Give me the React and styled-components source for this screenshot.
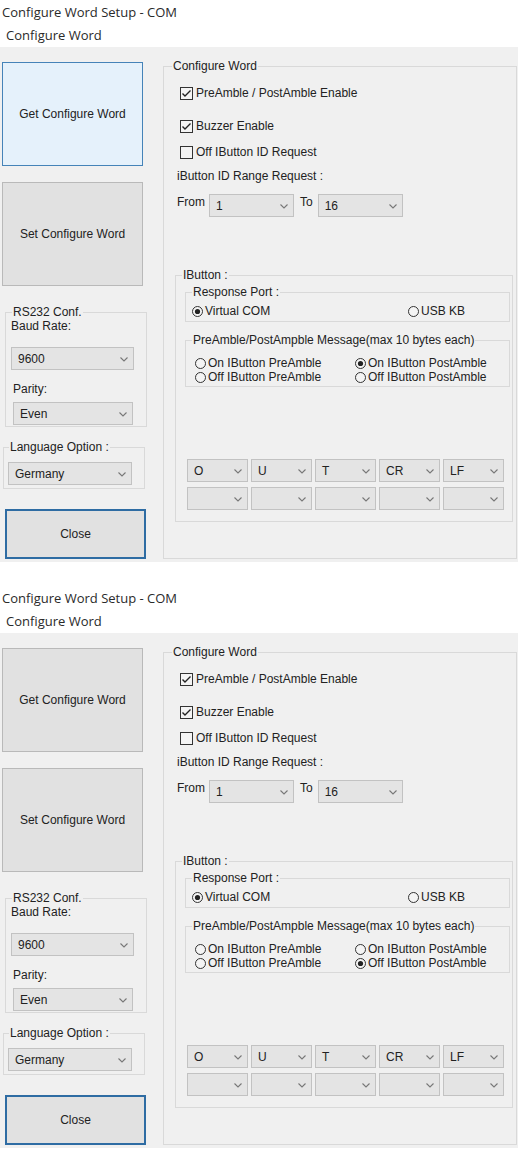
import React from 'react';
import styled, { createGlobalStyle } from 'styled-components';

const GlobalStyle = createGlobalStyle`
  html, body {
    margin: 0;
    padding: 0;
    background: #fff;
  }
  body {
    font-family: "Liberation Sans", Arial, sans-serif;
    font-size: 12px;
    color: #1f1f1f;
  }
  * {
    box-sizing: border-box;
  }
`;

const Page = styled.div`
  width: 518px;
  display: flex;
  flex-direction: column;
  gap: 24px;
`;

const Window = styled.section`
  width: 518px;
  display: flex;
  flex-direction: column;
`;

const TitleBar = styled.div`
  height: 24px;
  padding-left: 2px;
  font-family: "Open Sans", sans-serif;
  font-size: 13px;
  line-height: 24px;
  color: #2a2a2a;
`;

const SubTitle = styled(TitleBar)`
  height: 23px;
  line-height: 23px;
  padding-left: 6px;
`;

const Body = styled.div`
  display: flex;
  height: 515px;
  background: #f0f0f0;
`;

const LeftColumn = styled.div`
  width: 163px;
  flex-shrink: 0;
  padding: 15px 0 0 2px;
  display: flex;
  flex-direction: column;
  align-items: flex-start;
`;

const BigButton = styled.button`
  width: 141px;
  height: ${p => p.$h}px;
  margin: ${p => p.$m || 0};
  padding: 0;
  background: ${p => (p.$hover ? '#e5f1fb' : '#e1e1e1')};
  border: ${p =>
    p.$default ? '2px solid #2e6ca3' : p.$hover ? '1px solid #4583b8' : '1px solid #b9b9b9'};
  font: 12px "Liberation Sans", Arial, sans-serif;
  color: #222;
`;

const Group = styled.fieldset`
  margin: ${p => p.$m || 0};
  width: ${p => p.$w}px;
  padding: 0;
  border: 1px solid #d9d9d9;
  min-width: 0;
`;

const Legend = styled.legend`
  margin-left: ${p => p.$offset}px;
  padding: 0 1px;
  font-size: 12px;
  line-height: 14px;
  color: #222;
`;

const GroupContent = styled.div`
  padding: ${p => p.$pad};
  display: flex;
  flex-direction: column;
  align-items: flex-start;
`;

const FieldLabel = styled.div`
  line-height: 14px;
  margin: ${p => p.$m || 0};
  color: #222;
`;

const Combo = styled.div`
  width: ${p => (p.$w ? `${p.$w}px` : '100%')};
  height: 23px;
  margin: ${p => p.$m || 0};
  display: flex;
  align-items: center;
  justify-content: space-between;
  padding: 1px 5px 0 6px;
  background: #e4e4e4;
  border: 1px solid #c2c2c2;
  color: #222;
`;

const Chevron = () => (
  <svg width="8" height="5" viewBox="0 0 8 5">
    <polyline points="0.5,0.5 4,4 7.5,0.5" fill="none" stroke="#777" strokeWidth="1.1" />
  </svg>
);

const Select = ({ value, ...rest }) => (
  <Combo {...rest}>
    <span>{value}</span>
    <Chevron />
  </Combo>
);

const RightGroup = styled(Group)`
  height: 500px;
  flex-shrink: 0;
`;

const CheckRow = styled.label`
  display: flex;
  align-items: center;
  gap: 3px;
  height: 14px;
  margin: ${p => p.$m || 0};
  color: #222;
`;

const CheckBox = ({ checked }) => (
  <svg width="13" height="13" viewBox="0 0 13 13">
    <rect x="0.5" y="0.5" width="12" height="12" fill="#f4f4f4" stroke="#333" />
    {checked && (
      <polyline points="2.5,6.5 5,9 10.5,3.5" fill="none" stroke="#222" strokeWidth="1.4" />
    )}
  </svg>
);

const RangeRow = styled.div`
  display: flex;
  align-items: flex-start;
  margin-top: 11px;
`;

const RangeLabel = styled.span`
  line-height: 14px;
  margin: 1px ${p => p.$gap}px 0 ${p => p.$lead || 0}px;
  color: #222;
`;

const RadioGrid = styled.div`
  display: grid;
  grid-template-columns: ${p => p.$cols};
  margin-top: ${p => p.$mt}px;
`;

const RadioItem = styled.label`
  display: flex;
  align-items: center;
  gap: 2px;
  height: 14px;
  color: #222;
`;

const Radio = ({ on }) => (
  <svg width="11" height="11" viewBox="0 0 11 11">
    <circle cx="5.5" cy="5.5" r="5" fill="#f4f4f4" stroke="#333" />
    {on && <circle cx="5.5" cy="5.5" r="2.6" fill="#222" />}
  </svg>
);

const ComboGrid = styled.div`
  display: grid;
  grid-template-columns: repeat(5, 61px);
  column-gap: 3px;
  row-gap: 5px;
  margin: 72px 0 0 2px;
`;

const messageChars = ['O', 'U', 'T', 'CR', 'LF', '', '', '', '', ''];

function ConfigureWindow({ hoverGet, postAmble }) {
  return (
    <Window>
      <TitleBar>Configure Word Setup - COM</TitleBar>
      <SubTitle>Configure Word</SubTitle>
      <Body>
        <LeftColumn>
          <BigButton $h={104} $hover={hoverGet}>Get Configure Word</BigButton>
          <BigButton $h={104} $m="16px 0 0 0">Set Configure Word</BigButton>

          <Group $w={142} $m="19px 0 0 3px">
            <Legend $offset={6}>RS232 Conf.</Legend>
            <GroupContent $pad="0 0 1px 5px">
              <FieldLabel>Baud Rate:</FieldLabel>
              <Select value="9600" $w={123} $m="14px 0 0 0" />
              <FieldLabel $m="12px 0 0 2px">Parity:</FieldLabel>
              <Select value="Even" $w={120} $m="6px 0 0 2px" />
            </GroupContent>
          </Group>

          <Group $w={142} $m="13px 0 0 1px">
            <Legend $offset={5}>Language Option :</Legend>
            <GroupContent $pad="0 0 3px 4px">
              <Select value="Germany" $w={124} $m="8px 0 0 0" />
            </GroupContent>
          </Group>

          <BigButton $h={50} $default $m="20px 0 0 3px">Close</BigButton>
        </LeftColumn>

        <RightGroup $w={354} $m="12px 0 0 0">
          <Legend $offset={8}>Configure Word</Legend>
          <GroupContent $pad="13px 0 35px 13px">
            <CheckRow $m="0 0 0 3px">
              <CheckBox checked />
              PreAmble / PostAmble Enable
            </CheckRow>
            <CheckRow $m="19px 0 0 3px">
              <CheckBox checked />
              Buzzer Enable
            </CheckRow>
            <CheckRow $m="12px 0 0 3px">
              <CheckBox />
              Off IButton ID Request
            </CheckRow>
            <FieldLabel $m="10px 0 0 0">iButton ID Range Request :</FieldLabel>
            <RangeRow>
              <RangeLabel $gap={4}>From</RangeLabel>
              <Select value="1" $w={85} />
              <RangeLabel $gap={5} $lead={6}>To</RangeLabel>
              <Select value="16" $w={85} />
            </RangeRow>

            <Group $w={338} $m="51px 0 0 -2px">
              <Legend $offset={6}>IButton :</Legend>
              <GroupContent $pad="3px 0 11px 9px">
                <Group $w={325}>
                  <Legend $offset={6}>Response Port :</Legend>
                  <GroupContent $pad="0 0 3px 6px">
                    <RadioGrid $cols="216px auto" $mt={5}>
                      <RadioItem><Radio on />Virtual COM</RadioItem>
                      <RadioItem><Radio />USB KB</RadioItem>
                    </RadioGrid>
                  </GroupContent>
                </Group>

                <Group $w={325} $m="11px 0 0 0">
                  <Legend $offset={6}>PreAmble/PostAmpble Message(max 10 bytes each)</Legend>
                  <GroupContent $pad="0 0 2px 9px">
                    <RadioGrid $cols="160px auto" $mt={9}>
                      <RadioItem><Radio />On IButton PreAmble</RadioItem>
                      <RadioItem><Radio on={postAmble === 'on'} />On IButton PostAmble</RadioItem>
                      <RadioItem><Radio />Off IButton PreAmble</RadioItem>
                      <RadioItem><Radio on={postAmble === 'off'} />Off IButton PostAmble</RadioItem>
                    </RadioGrid>
                  </GroupContent>
                </Group>

                <ComboGrid>
                  {messageChars.map((c, i) => (
                    <Select key={i} value={c} />
                  ))}
                </ComboGrid>
              </GroupContent>
            </Group>
          </GroupContent>
        </RightGroup>
      </Body>
    </Window>
  );
}

export default function App() {
  return (
    <>
      <GlobalStyle />
      <Page>
        <ConfigureWindow hoverGet postAmble="on" />
        <ConfigureWindow postAmble="off" />
      </Page>
    </>
  );
}
